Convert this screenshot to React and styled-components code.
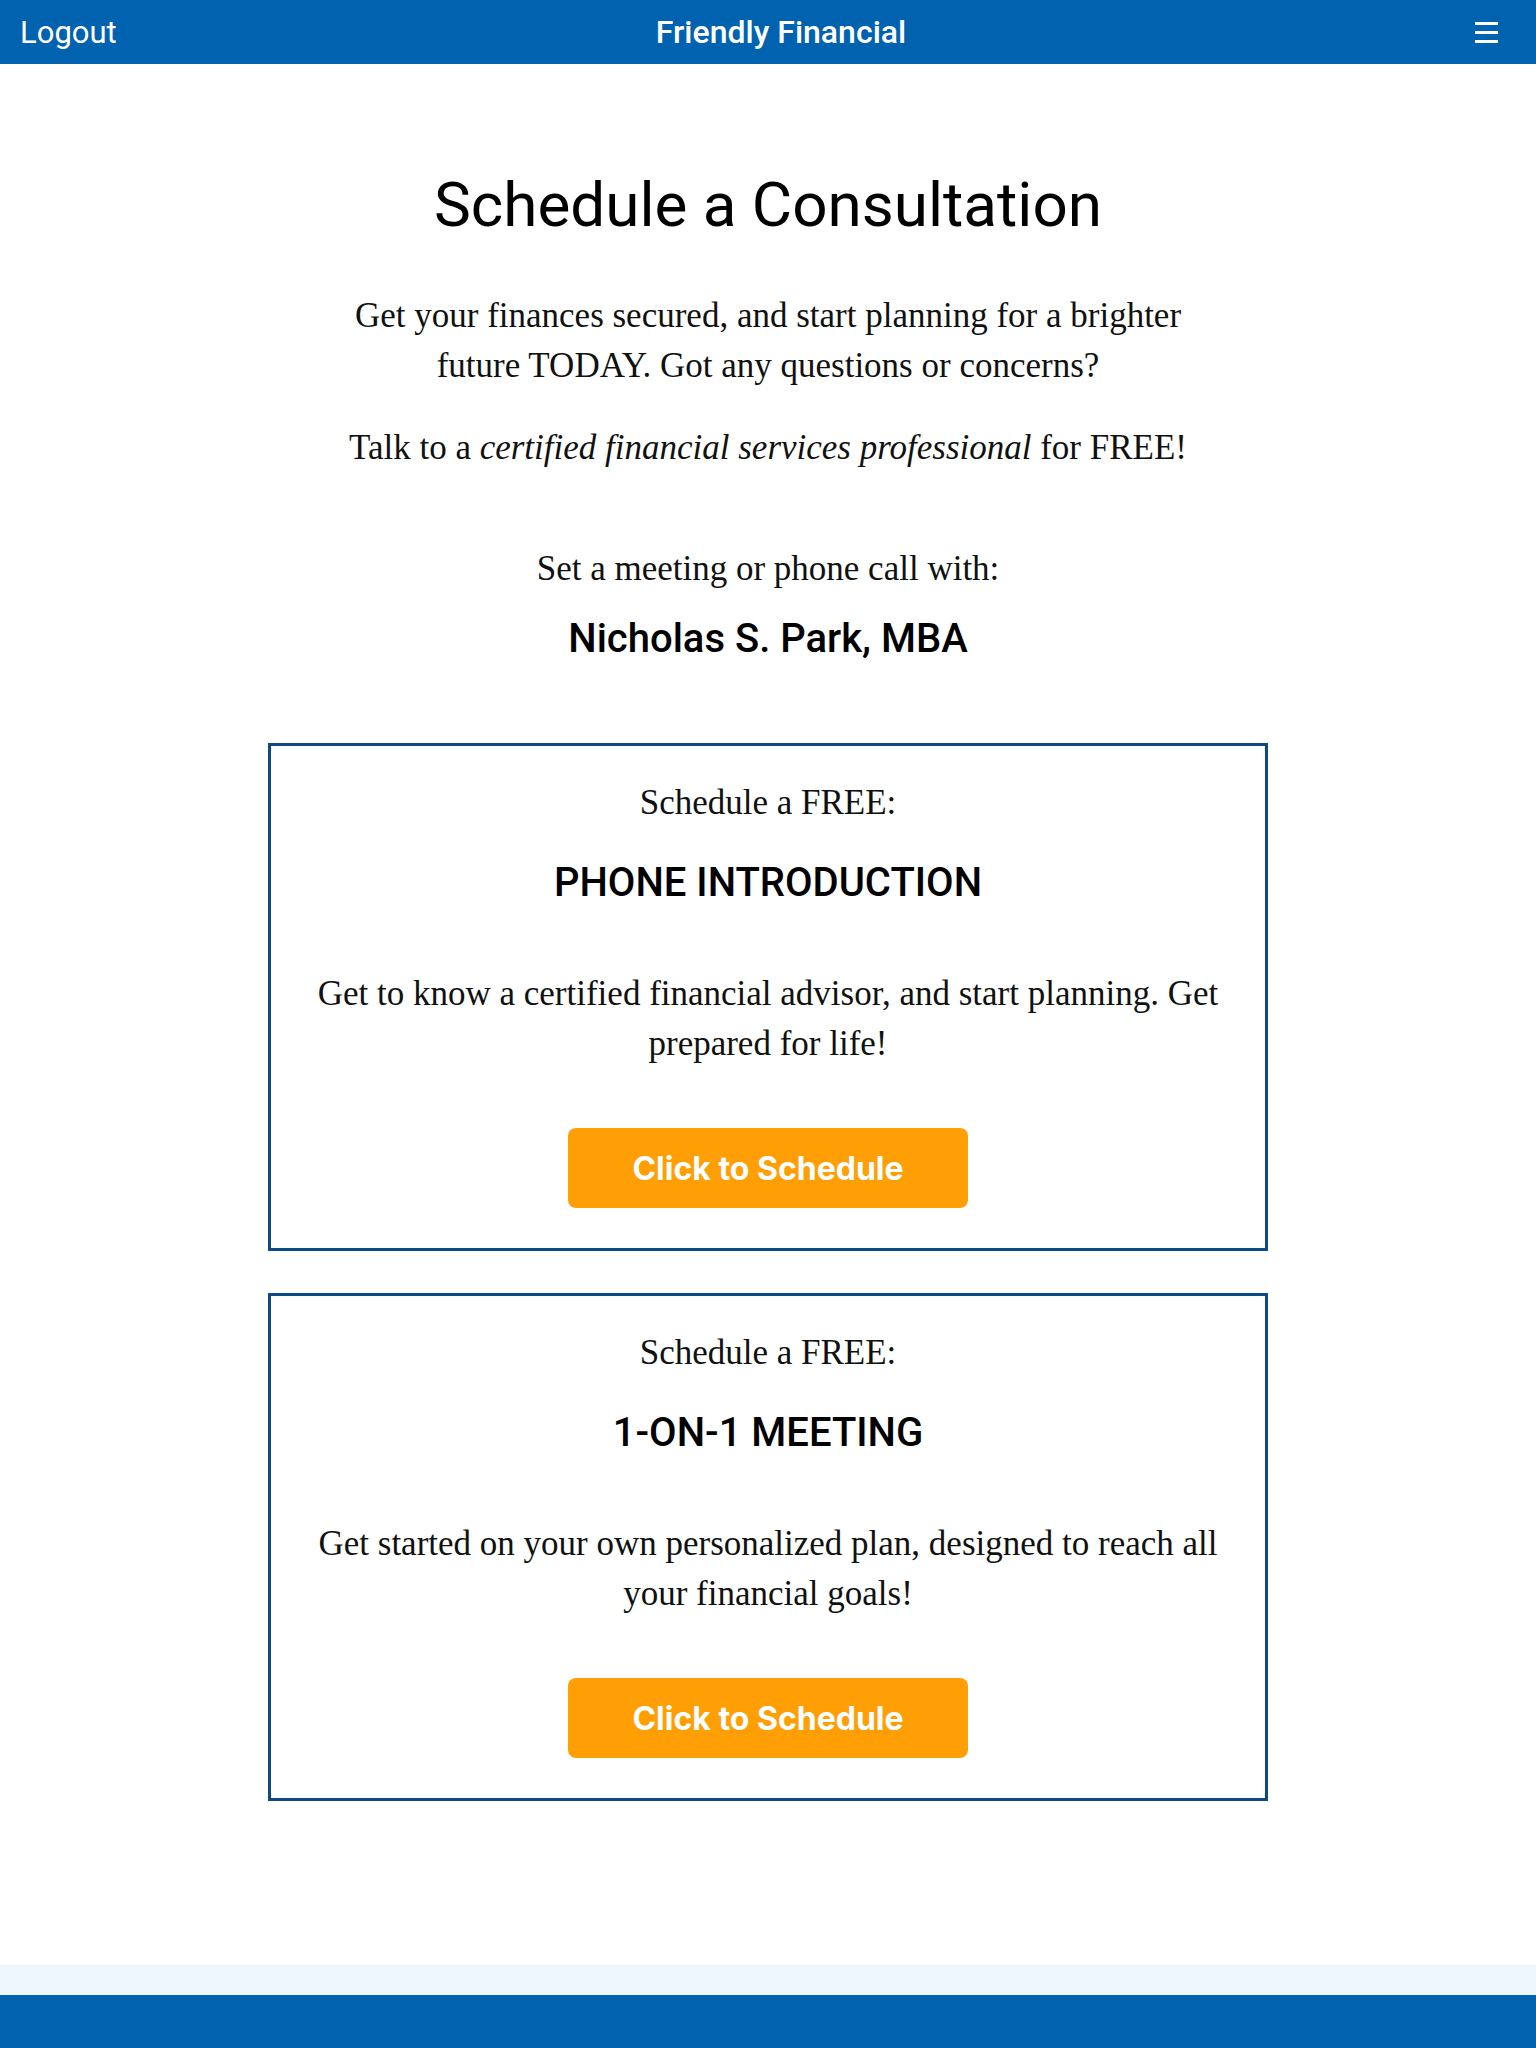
import React from 'react'
import styled, { createGlobalStyle } from 'styled-components'

const GlobalStyle = createGlobalStyle`
    * {
        box-sizing: border-box;
    }
    body {
        margin: 0;
        background: #fff;
        font-family: Roboto, 'Liberation Sans', sans-serif;
        color: #000;
    }
`

const options = [
    {
        id: 'phone',
        title: 'PHONE INTRODUCTION',
        text: 'Get to know a certified financial advisor, and start planning. Get prepared for life!'
    },
    {
        id: 'meeting',
        title: '1-ON-1 MEETING',
        text: 'Get started on your own personalized plan, designed to reach all your financial goals!'
    }
]

const App = () => {
    return (
        <>
            <GlobalStyle />
            <Navbar>
                <NavLink href='#'>Logout</NavLink>
                <Brand>Friendly Financial</Brand>
                <MenuButton aria-label='menu'>
                    <span />
                    <span />
                    <span />
                </MenuButton>
            </Navbar>
            <Main>
                <Heading>Schedule a Consultation</Heading>
                <Lead>
                    Get your finances secured, and start planning for a brighter future TODAY. Got any questions or concerns?
                </Lead>
                <Lead $gap={32}>
                    Talk to a <em>certified financial services professional</em> for FREE!
                </Lead>
                <Lead $gap={71}>Set a meeting or phone call with:</Lead>
                <Advisor>Nicholas S. Park, MBA</Advisor>
                <Cards>
                    {options.map((item) => {
                        const { id, title, text } = item
                        return (
                            <Card key={id}>
                                <Kicker>Schedule a FREE:</Kicker>
                                <CardTitle>{title}</CardTitle>
                                <CardText>{text}</CardText>
                                <ScheduleButton type='button'>Click to Schedule</ScheduleButton>
                            </Card>
                        )
                    })}
                </Cards>
            </Main>
            <Band />
            <Footer>
                <p>© 2024 Friendly Financial / All rights reserved / Securities offered through registered representatives</p>
            </Footer>
        </>
    )
}

const Navbar = styled.header`
    height: 64px;
    background: #0162af;
    color: #fff;
    display: grid;
    grid-template-columns: 1fr auto 1fr;
    align-items: center;
    padding: 0 38px 0 20px;
`

const NavLink = styled.a`
    justify-self: start;
    color: #fff;
    text-decoration: none;
    font-size: 31px;
    font-weight: 400;
`

const Brand = styled.div`
    font-size: 32px;
    font-weight: 500;
    /* title sits a little right of centre */
    transform: translateX(22px);
`

const MenuButton = styled.button`
    justify-self: end;
    background: none;
    border: 0;
    padding: 0;
    width: 23px;
    display: flex;
    flex-direction: column;
    gap: 6px;
    cursor: pointer;
    span {
        display: block;
        height: 3px;
        background: #fff;
    }
`

const Main = styled.main`
    padding: 107px 0 164px;
    display: flex;
    flex-direction: column;
    align-items: center;
    text-align: center;
`

const Heading = styled.h1`
    margin: 0;
    font-size: 62px;
    line-height: 68px;
    font-weight: 400;
`

const Lead = styled.p`
    margin: ${({ $gap }) => $gap || 52}px 0 0;
    max-width: 860px;
    font-family: 'Liberation Serif', serif;
    font-size: 35px;
    line-height: 50px;
    color: #111;
    em {
        font-style: italic;
    }
`

const Advisor = styled.h2`
    margin: 23px 0 0;
    font-size: 40px;
    line-height: 44px;
    font-weight: 500;
`

const Cards = styled.div`
    margin-top: 82px;
    display: flex;
    flex-direction: column;
    gap: 42px;
`

const Card = styled.article`
    width: 1000px;
    border: 3px solid #0b4a85;
    padding: 32px 40px 40px;
    display: flex;
    flex-direction: column;
    align-items: center;
`

const Kicker = styled.p`
    margin: 0;
    font-family: 'Liberation Serif', serif;
    font-size: 35px;
    line-height: 50px;
    color: #111;
`

const CardTitle = styled.h3`
    margin: 33px 0 0;
    font-size: 40px;
    line-height: 44px;
    font-weight: 500;
`

const CardText = styled.p`
    margin: 64px 0 0;
    font-family: 'Liberation Serif', serif;
    font-size: 35px;
    line-height: 50px;
    color: #111;
`

const ScheduleButton = styled.button`
    margin-top: 59px;
    width: 400px;
    height: 80px;
    border: 0;
    border-radius: 8px;
    background: #ff9e05;
    color: #fff;
    font-family: Inter, Roboto, sans-serif;
    font-size: 32px;
    font-weight: 700;
    cursor: pointer;
`

const Band = styled.div`
    height: 30px;
    background: #eef6fe;
`

const Footer = styled.footer`
    background: #0162af;
    color: #fff;
    padding: 50px 20px 40px;
    text-align: center;
    p {
        margin: 0;
        font-size: 20px;
        line-height: 24px;
    }
`

export default App
